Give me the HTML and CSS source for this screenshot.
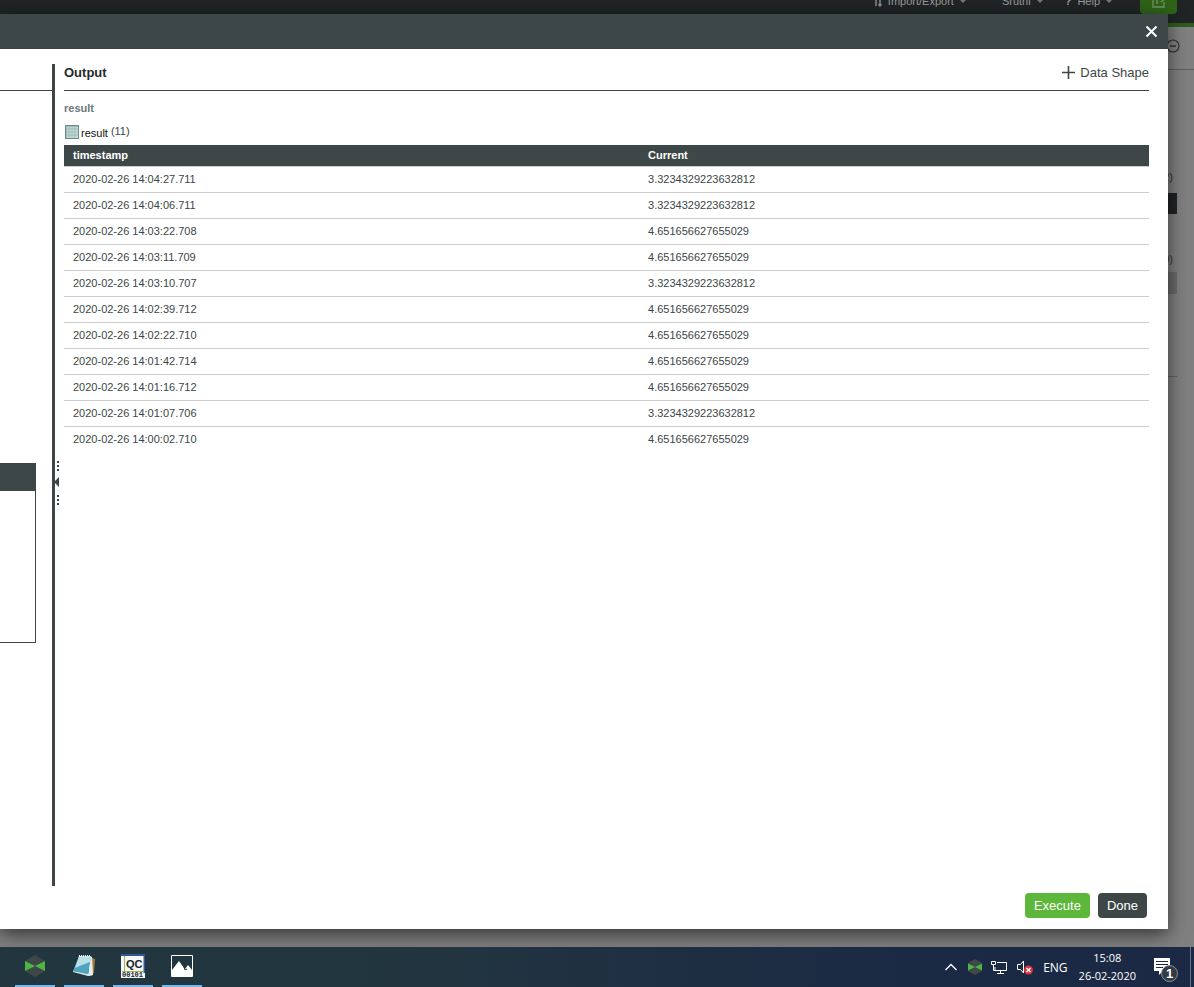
FILE: index.html
```html
<!DOCTYPE html>
<html lang="en">
<head>
<meta charset="utf-8">
<title>Service output</title>
<link rel="stylesheet" href="styles.css">
</head>
<body>
<main class="app">
  <header class="topbar">
    <nav class="nav">
      <a class="nav-item" href="#"><svg width="8" height="11" viewBox="0 0 8 11"><path d="M2 10V1M6 1v9M0.500 3L2 1l1.500 2M4.500 8L6 10l1.500-2" fill="none" stroke="#8a8c8c" stroke-width="1.500"/></svg><span>Import/Export</span><i class="caret"></i></a>
      <a class="nav-item user" href="#"><span>Sruthi</span><i class="caret"></i></a>
      <a class="nav-item help" href="#"><b>?</b><span>Help</span><i class="caret"></i></a>
      <button class="launch" aria-label="Open"><svg width="16" height="16" viewBox="0 0 16 16"><path d="M8 2H2v12h11V9M6 11V6h7M10 3l3.500 3L10 9" fill="none" stroke="#739567" stroke-width="1.300"/></svg></button>
    </nav>
  </header>
  <section class="page">
    <div class="page-head"><svg width="14" height="14" viewBox="0 0 14 14"><circle cx="7" cy="7" r="6" fill="none" stroke="#303334" stroke-width="1.200"/><path d="M4 7h6" stroke="#303334" stroke-width="1.500"/></svg></div>
    <div class="page-body">
      <span class="count">(2)</span>
      <div class="strip strip-dark"></div>
      <span class="count count-next">(0)</span>
      <div class="strip strip-grey"></div>
      <hr class="page-rule">
    </div>
  </section>

  <div class="modal" role="dialog" aria-label="Output">
    <div class="modal-head"><button class="close" aria-label="Close"><svg width="13" height="13" viewBox="0 0 13 13"><path d="M1.500 1.500l10 10M11.500 1.500l-10 10" stroke="#fff" stroke-width="2"/></svg></button></div>
    <div class="modal-body">
      <aside class="inputs">
        <div class="inputs-head"></div>
        <div class="code"><div class="code-head"></div></div>
      </aside>
      <div class="splitter">
        <svg class="grip" width="8" height="48" viewBox="0 0 8 48"><path d="M3 1h2v2H3zM3 5h2v2H3zM3 9h2v2H3zM3 35h2v2H3zM3 39h2v2H3zM3 43h2v2H3zM0 22l5-5v10z" fill="#3c4647"/></svg>
      </div>
      <section class="output">
        <div class="output-head">
          <h2>Output</h2>
          <button class="shape"><svg width="13" height="13" viewBox="0 0 13 13"><path d="M6.500 0v13M0 6.500h13" stroke="#3c4647" stroke-width="1.600"/></svg>Data Shape</button>
        </div>
        <h3>result</h3>
        <div class="caption">
          <svg width="14" height="14" viewBox="0 0 14 14"><rect x="0.500" y="0.500" width="13" height="13" fill="#c8dcda" stroke="#708b8b"/><path d="M1 4h12M1 7h12M1 10h12M4 1v12M7 1v12M10 1v12" stroke="#9fbcba"/><path d="M1.500 13V1.500H13" fill="none" stroke="#9db8b7"/></svg>
          <span class="name">result</span><span class="rows">(11)</span>
        </div>
        <table>
          <thead><tr><th scope="col">timestamp</th><th scope="col">Current</th></tr></thead>
          <tbody>
            <tr><td>2020-02-26 14:04:27.711</td><td>3.3234329223632812</td></tr>
            <tr><td>2020-02-26 14:04:06.711</td><td>3.3234329223632812</td></tr>
            <tr><td>2020-02-26 14:03:22.708</td><td>4.651656627655029</td></tr>
            <tr><td>2020-02-26 14:03:11.709</td><td>4.651656627655029</td></tr>
            <tr><td>2020-02-26 14:03:10.707</td><td>3.3234329223632812</td></tr>
            <tr><td>2020-02-26 14:02:39.712</td><td>4.651656627655029</td></tr>
            <tr><td>2020-02-26 14:02:22.710</td><td>4.651656627655029</td></tr>
            <tr><td>2020-02-26 14:01:42.714</td><td>4.651656627655029</td></tr>
            <tr><td>2020-02-26 14:01:16.712</td><td>4.651656627655029</td></tr>
            <tr><td>2020-02-26 14:01:07.706</td><td>3.3234329223632812</td></tr>
            <tr><td>2020-02-26 14:00:02.710</td><td>4.651656627655029</td></tr>
          </tbody>
        </table>
      </section>
    </div>
    <footer class="modal-foot"><button class="btn btn-go">Execute</button><button class="btn">Done</button></footer>
  </div>
</main>

<footer class="taskbar">
  <div class="apps">
    <button class="task" aria-label="ThingWorx"><svg width="22" height="22" viewBox="0 0 22 22"><path d="M11 0l9.500 5.500v11L11 22l-9.500-5.500v-11z" fill="#3f4647"/><path d="M1 6l10 5-10 5zM21 6l-10 5 10 5z" fill="#4bb643"/></svg></button>
    <button class="task" aria-label="Notepad"><svg width="24" height="22" viewBox="0 0 24 22"><path d="M20 3l3 1-1 14-3 2z" fill="#a87a3c"/><path d="M18 1l2 1 1 18-5 1z" fill="#e5eff1"/><path d="M7 1h12l-3 18L1 16z" fill="#4fa5be"/><path d="M7 1h12l-1 6-8 3-7 3z" fill="#b9dfe7"/><path d="M1 16l15 3 5 1-5 1-15-4z" fill="#d5edf0"/><path d="M7 1h12" stroke="#e9f3f4" stroke-width="2" stroke-dasharray="1 1"/></svg></button>
    <button class="task" aria-label="QC"><svg width="24" height="24" viewBox="0 0 24 24"><path d="M0 0h24v24H0z" fill="#f5f6f5"/><path d="M0 1h24M23.500 0v19" stroke="#31579b" stroke-width="2"/><path d="M3.500 2v16M1 17.500h22" stroke="#8abc54"/><text class="qc" x="5" y="14">QC</text><text class="bits" x="1" y="23">00101</text></svg></button>
    <button class="task" aria-label="Photos"><svg width="22" height="22" viewBox="0 0 22 22"><path d="M0.500 0.500h21v21H0.500z" fill="#22363f" stroke="#fff"/><path d="M1 15l7-9 5 7 1 1 3-4 4 5v6H1z" fill="#fff"/><path d="M13 12l1 3 2-1" fill="none" stroke="#22363f"/></svg></button>
  </div>
  <div class="tray">
    <svg class="up" width="12" height="8" viewBox="0 0 12 8"><path d="M0.500 7L6 1.500 11.500 7" fill="none" stroke="#fff" stroke-width="1.300"/></svg>
    <svg width="14" height="16" viewBox="0 0 14 16"><path d="M7 0l7 4v8l-7 4-7-4V4z" fill="#414948"/><path d="M0 4.500L7 8l-7 3.500zM14 4.500L7 8l7 3.500z" fill="#4bb643"/></svg>
    <svg width="17" height="15" viewBox="0 0 17 15"><path d="M6 2.500h9.500v8H4V7M9.500 11v3M6 13.500h7M0.500 1.500h4v3h-4zM2.500 5v5.500H4" fill="none" stroke="#fff"/></svg>
    <svg width="17" height="15" viewBox="0 0 17 15"><path d="M0.500 4.500h3l3-3.500v12l-3-3.500h-3z" fill="none" stroke="#fff"/><circle cx="11.500" cy="10" r="4.500" fill="#d9323d"/><path d="M9.500 8l4 4M13.500 8l-4 4" stroke="#fff" stroke-width="1.300"/></svg>
    <span class="lang">ENG</span>
    <div class="clock"><span>15:08</span><span>26-02-2020</span></div>
    <svg class="notes" width="26" height="26" viewBox="0 0 26 26"><path d="M0 1h16v13H9l-4 4v-4H0z" fill="#fff"/><path d="M2 4.500h12M2 7.500h12M2 10.500h7" stroke="#1b2a44"/><circle cx="15.500" cy="16.500" r="8" fill="#343a42" stroke="#8c929a"/><text class="badge" x="12" y="21">1</text></svg>
    <i class="peek"></i>
  </div>
</footer>
</body>
</html>
```
FILE: styles.css
```css
* { box-sizing: border-box; }
body {
  margin: 0;
  height: 100vh;
  display: flex;
  flex-direction: column;
  font-family: "Liberation Sans", Arial, sans-serif;
  font-size: 11px;
  color: #3c4647;
}
button { border: 0; padding: 0; background: none; font: inherit; color: inherit; }
svg { display: block; flex: none; }
h2, h3 { margin: 0; }

.app {
  flex: 1;
  min-height: 0;
  position: relative;
  display: flex;
  flex-direction: column;
  background: #808080;
  overflow: hidden;
}
.topbar {
  flex: none;
  height: 27px;
  overflow: hidden;
  background: #202425;
  border-bottom: 4px solid #2e5c1c;
}
.nav {
  height: 44px;
  margin-top: -21px;
  padding-right: 17px;
  display: flex;
  align-items: center;
  justify-content: flex-end;
}
.nav-item {
  display: flex;
  align-items: center;
  gap: 6px;
  color: #9a9c9c;
  text-decoration: none;
}
.user { margin-left: 36px; }
.help { margin-left: 22px; }
.caret { border: 3px solid transparent; border-top-color: #737676; border-bottom: 0; }
.launch {
  width: 37px;
  height: 26px;
  margin-left: 28px;
  display: grid;
  place-items: center;
  background: #2e6418;
  border-radius: 4px;
}
.page { flex: 1; }
.page-head {
  height: 43px;
  padding: 12px 14px;
  display: flex;
  justify-content: flex-end;
  border-bottom: 1px solid #5c5e5e;
}
.page-body {
  padding: 99px 17px 0 0;
  display: flex;
  flex-direction: column;
  align-items: flex-end;
}
.count { height: 16px; line-height: 16px; margin-right: 4px; color: #303536; }
.count-next { margin-top: 37px; }
.strip { width: 100%; height: 21px; margin-top: 8px; }
.strip-dark { background: #202425; }
.strip-grey { height: 22px; margin-top: 5px; background: #6b6b6b; }
.page-rule { width: 100%; margin: 82px 0 0; border: 0; border-top: 1px solid #626464; }

.modal {
  position: absolute;
  inset: 14px 26px 18px 0;
  display: flex;
  flex-direction: column;
  background: #fff;
  box-shadow: 0 5px 18px rgba(0, 0, 0, 0.6);
}
.modal-head {
  flex: none;
  height: 35px;
  padding-right: 10px;
  display: flex;
  align-items: center;
  justify-content: flex-end;
  background: #3e4748;
}
.modal-body { flex: 1; min-height: 0; display: flex; padding-top: 15px; }
.inputs { flex: none; width: 52px; }
.inputs-head { height: 27px; border-bottom: 1px solid #3c4647; }
.code {
  width: 36px;
  height: 180px;
  margin-top: 372px;
  border: solid #3c4647;
  border-width: 0 1px 1px 0;
}
.code-head { height: 28px; background: #3e4748; }
.splitter { position: relative; flex: none; width: 3px; background: #3c4647; }
.grip { position: absolute; left: 2px; top: 396px; }
.output { flex: 1; padding: 0 19px 0 9px; }
.output-head {
  height: 27px;
  padding-bottom: 9px;
  display: flex;
  align-items: center;
  justify-content: space-between;
  border-bottom: 1px solid #3c4647;
}
.output-head h2 { font-size: 13px; color: #232b2d; }
.shape { display: flex; align-items: center; gap: 5px; font-size: 13px; }
.output h3 { margin-top: 9px; font-size: 11px; line-height: 16px; color: #6c797c; }
.caption { height: 29px; padding: 2px 1px 0; display: flex; align-items: center; }
.name { margin: 2px 3px 0 2px; color: #111; }
.rows { margin-top: -2px; }
table { width: 100%; table-layout: fixed; border-collapse: collapse; }
th, td { height: 26px; padding: 0 9px; text-align: left; }
th { height: 21px; background: #3e4748; color: #fff; }
th:first-child { width: 53%; }
td { border-top: 1px solid #ccc; }

.modal-foot {
  flex: none;
  padding: 7px 21px 11px;
  display: flex;
  gap: 8px;
  justify-content: flex-end;
}
.btn {
  height: 25px;
  padding: 0 9px;
  border-radius: 4px;
  background: #3e4748;
  color: #fff;
  font-size: 13px;
}
.btn-go { background: #5cb73a; }

.taskbar {
  flex: none;
  height: 40px;
  display: flex;
  justify-content: space-between;
  background: linear-gradient(90deg, #22363f, #22363f 30%, #1b2a44 75%, #1b2944);
  color: #fff;
  font-family: "Open Sans", "Noto Sans", sans-serif;
}
.apps { display: flex; gap: 9px; padding-left: 15px; }
.task { width: 40px; display: grid; place-items: center; border-bottom: 2px solid #76b9ed; }
.qc { font: bold 11px "Liberation Sans", sans-serif; fill: #20222a; }
.bits { font: bold 7px "Liberation Mono", monospace; fill: #20222a; }
.tray { display: flex; align-items: center; gap: 9px; }
.up { margin-right: 2px; }
.lang { font-size: 12px; }
.clock {
  margin: 0 9px 0 2px;
  display: flex;
  flex-direction: column;
  align-items: center;
  font-size: 11px;
  line-height: 18px;
}
.notes { margin-top: 6px; }
.badge { font: bold 13px "Liberation Sans", sans-serif; fill: #fff; }
.peek { height: 40px; width: 4px; margin-left: 1px; border-left: 1px solid #68748a; }
```
